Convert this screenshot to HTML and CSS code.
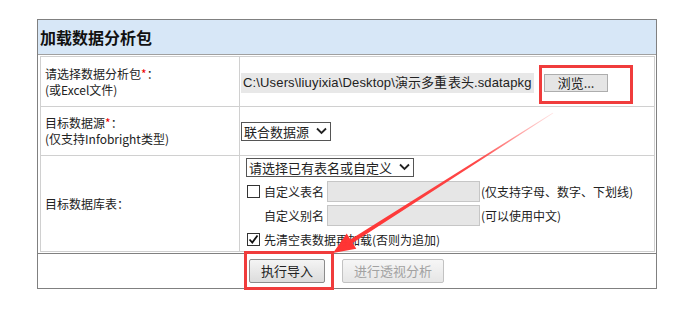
FILE: index.html
```html
<!DOCTYPE html>
<html lang="zh-CN">
<head>
    <meta charset="UTF-8">
    <title>加载数据分析包</title>
    <link rel="stylesheet" href="styles.css">
</head>
<body>

<div class="panel">
    <div class="panel-title">加载数据分析包</div>
    <div class="panel-body">
        <table class="form-table">
            <tr class="row-file">
                <td class="label">请选择数据分析包<span class="req">*</span>：<br>(或Excel文件)</td>
                <td class="value">
                    <div class="file-line">
                        <span class="file-path">C:\Users\liuyixia\Desktop\演示多重表头.sdatapkg</span>
                        <button class="btn">浏览...</button>
                    </div>
                </td>
            </tr>
            <tr class="row-source">
                <td class="label">目标数据源<span class="req">*</span>：<br>(仅支持Infobright类型)</td>
                <td class="value">
                    <div class="select">联合数据源
                        <svg width="11" height="8" viewBox="0 0 11 8"><path d="M1 1.5 L5.5 6 L10 1.5" fill="none" stroke="#222" stroke-width="1.8"/></svg>
                    </div>
                </td>
            </tr>
            <tr class="row-table">
                <td class="label">目标数据库表：</td>
                <td class="value">
                    <div class="table-opts">
                        <div class="select">请选择已有表名或自定义
                            <svg width="11" height="8" viewBox="0 0 11 8"><path d="M1 1.5 L5.5 6 L10 1.5" fill="none" stroke="#222" stroke-width="1.8"/></svg>
                        </div>
                        <div class="opt-line">
                            <span class="check"></span>
                            <span class="opt-name">自定义表名</span>
                            <span class="text-box"></span>
                            <span class="hint">(仅支持字母、数字、下划线)</span>
                        </div>
                        <div class="opt-line">
                            <span class="check blank"></span>
                            <span class="opt-name">自定义别名</span>
                            <span class="text-box"></span>
                            <span class="hint">(可以使用中文)</span>
                        </div>
                        <div class="opt-line">
                            <span class="check">
                                <svg width="11" height="11" viewBox="0 0 11 11"><path d="M1.5 5.5 L4.3 8.5 L9.5 1.5" fill="none" stroke="#111" stroke-width="1.8"/></svg>
                            </span>
                            <span class="opt-name">先清空表数据再加载(否则为追加)</span>
                        </div>
                    </div>
                </td>
            </tr>
        </table>
    </div>
    <div class="panel-footer">
        <button class="btn btn-big">执行导入</button>
        <button class="btn btn-big" disabled>进行透视分析</button>
    </div>
</div>

<!-- annotation drawn over the screenshot -->
<svg class="marks" width="681" height="315" viewBox="0 0 681 315">
    <defs>
        <linearGradient id="fade" x1="553" y1="113" x2="333" y2="253" gradientUnits="userSpaceOnUse">
            <stop offset="0" stop-color="#f44" stop-opacity="0.15"/>
            <stop offset="0.35" stop-color="#f33" stop-opacity="0.9"/>
            <stop offset="1" stop-color="#f33"/>
        </linearGradient>
    </defs>
    <rect x="540.5" y="66.5" width="91" height="36" fill="none" stroke="#f03c3c" stroke-width="3"/>
    <rect x="245.5" y="252.5" width="87" height="36" fill="none" stroke="#f03c3c" stroke-width="3"/>
    <polygon points="553.3,113.3 552.7,112.7 350.4,239.5 346.7,233.6 333,253 356.3,248.8 352.6,242.9" fill="url(#fade)"/>
</svg>

</body>
</html>
```

FILE: styles.css
```css
body {
    margin: 0;
    padding: 19px 0 0 37px;
    font-family: "Noto Sans CJK SC", "Liberation Sans", sans-serif;
    font-size: 12px;
    color: #222;
    background: #fff;
}

.panel {
    width: 618px;
    border: 1px solid #808080;
}

.panel-title {
    height: 34px;
    line-height: 34px;
    padding-left: 2px;
    background: #d7e7f7;
    border-bottom: 1px solid #a0a0a0;
    font-size: 16px;
    font-weight: bold;
    color: #111;
}

.panel-body {
    padding: 1px 1px 1px 2px;
    border-bottom: 1px solid #808080;
}

.form-table {
    width: 615px;
    border-collapse: collapse;
    border: 1px solid #c8c8c8;
}

.form-table td {
    border: 1px solid #d0d0d0;
    padding: 0;
}

.label {
    width: 194px;
    padding-left: 4px !important;
    line-height: 16px;
    vertical-align: middle;
}

.req {
    color: #e00;
}

.row-file td {
    height: 49px;
}

.row-source td {
    height: 48px;
}

.row-table td {
    height: 95px;
}

.value {
    padding-left: 1px !important;
}

.file-line {
    display: flex;
    align-items: center;
    gap: 10px;
    margin-top: 2px;
}

.file-path {
    display: inline-block;
    padding: 1px 2px;
    background: #e8e8e8;
    font-family: "Liberation Sans", Arial, sans-serif;
    font-size: 13px;
    letter-spacing: 0.15px;
    line-height: 18px;
    color: #222;
}

.file-path, .opt-name, .hint {
    white-space: nowrap;
}

.btn {
    font-family: "Noto Sans CJK SC", sans-serif;
    font-size: 13px;
    color: #222;
    background: #e5e5e5;
    border: 1px solid #adadad;
    padding: 0 13px;
    height: 18px;
    line-height: 16px;
}

.btn-big {
    height: 24px;
    padding: 0 11px;
    background: linear-gradient(#f4f4f4, #dcdcdc);
    border-color: #8c8c8c;
    border-radius: 2px;
}

.btn-big:disabled {
    color: #a2a2a2;
    background: linear-gradient(#f6f6f6, #e6e6e6);
    border-color: #c2c2c2;
}

.select {
    display: inline-flex;
    align-items: center;
    gap: 7px;
    height: 17px;
    padding: 0 3px 0 2px;
    border: 1px solid #555;
    font-size: 13px;
    line-height: 17px;
    color: #222;
    background: #fff;
}

.table-opts {
    display: flex;
    flex-direction: column;
    align-items: flex-start;
    gap: 3px;
    padding-left: 5px;
}

.table-opts .select {
    margin-bottom: 1px;
}

.opt-line {
    display: flex;
    align-items: center;
    height: 21px;
}

.check {
    display: inline-flex;
    align-items: center;
    justify-content: center;
    width: 11px;
    height: 11px;
    margin: 0 4px 0 1px;
    border: 1px solid #333;
    background: #fff;
}

.check.blank {
    border-color: transparent;
    background: none;
}

.opt-name {
    font-size: 12px;
    width: 63px;
}

.text-box {
    display: inline-block;
    width: 151px;
    height: 19px;
    background: #e6e6e6;
    border: 1px solid #c6c6c6;
    margin-right: 1px;
}

.hint {
    font-size: 12px;
}

.panel-footer {
    height: 34px;
    display: flex;
    align-items: center;
    gap: 17px;
    padding-left: 211px;
}

.marks {
    position: absolute;
    left: 0;
    top: 0;
    pointer-events: none;
}
```
